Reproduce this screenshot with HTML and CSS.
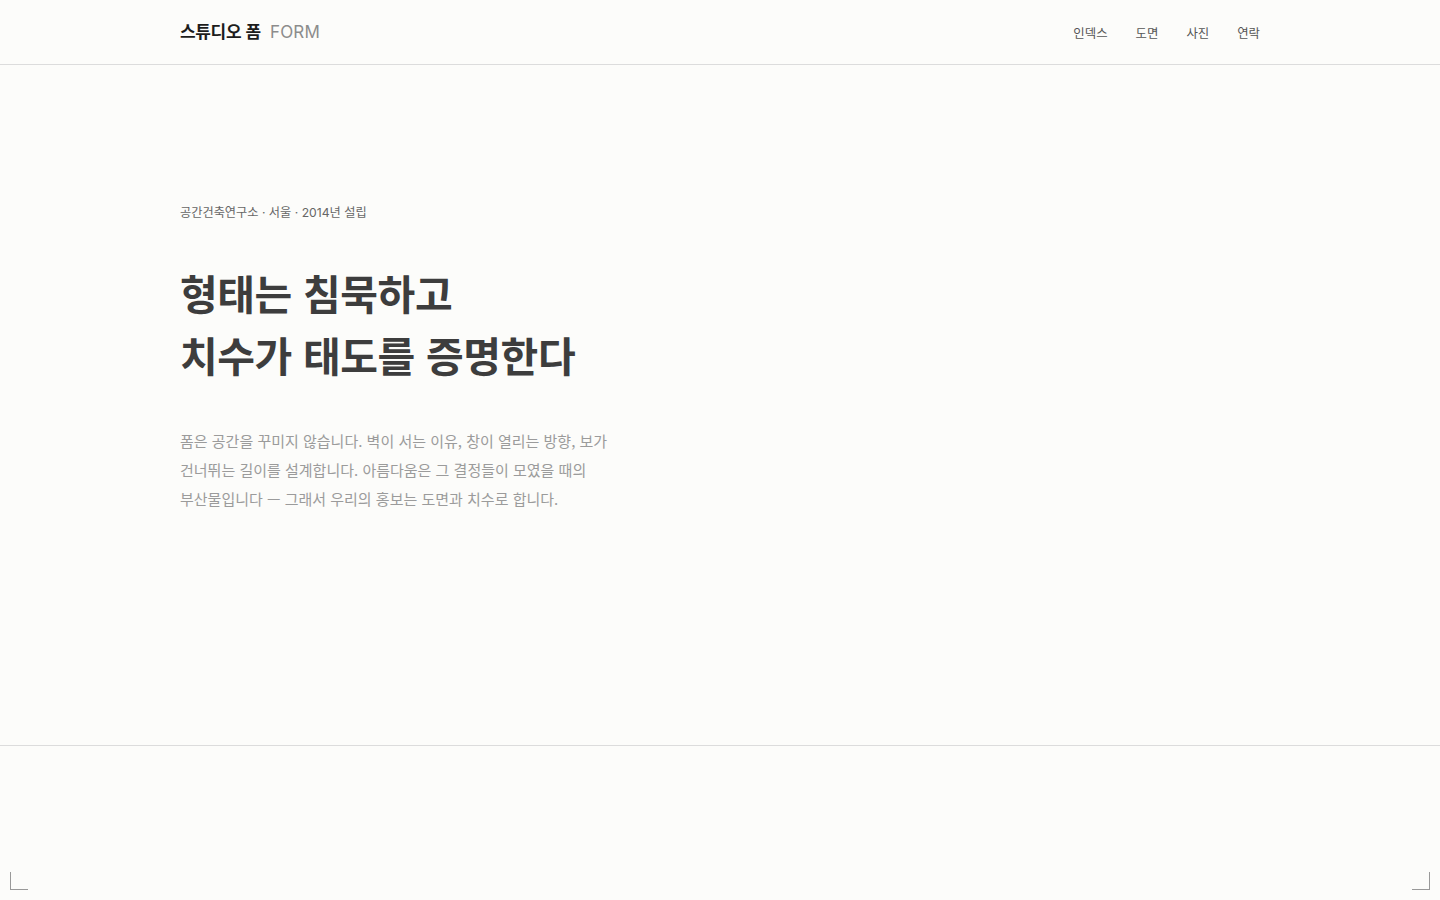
FILE: index.html
```html
<!DOCTYPE html>
<html lang="ko">
<head>
<meta charset="utf-8">
<title>스튜디오 폼 FORM</title>
<link rel="stylesheet" href="styles.css">
</head>
<body>
<header class="site-header">
  <div class="container header-inner">
    <a class="logo" href="#"><span class="logo-ko">스튜디오 폼</span><span class="logo-en">FORM</span></a>
    <nav class="nav">
      <a href="#">인덱스</a>
      <a href="#">도면</a>
      <a href="#">사진</a>
      <a href="#">연락</a>
    </nav>
  </div>
</header>
<main>
  <section class="hero">
    <div class="container">
      <p class="eyebrow">공간건축연구소 · 서울 · 2014년 설립</p>
      <h1 class="title">형태는 침묵하고<br>치수가 태도를 증명한다</h1>
      <p class="lead">폼은 공간을 꾸미지 않습니다. 벽이 서는 이유, 창이 열리는 방향, 보가 건너뛰는 길이를 설계합니다. 아름다움은 그 결정들이 모였을 때의 부산물입니다 — 그래서 우리의 홍보는 도면과 치수로 합니다.</p>
    </div>
  </section>
  <section class="next"></section>
</main>
<span class="corner corner-left"></span>
<span class="corner corner-right"></span>
</body>
</html>
```

FILE: styles.css
```css
* { box-sizing: border-box; }
html, body { margin: 0; padding: 0; }
body {
  background: #fcfcfa;
  font-family: "Inter", "Noto Sans CJK KR", sans-serif;
  color: #333;
  -webkit-font-smoothing: antialiased;
}
a { text-decoration: none; color: inherit; }

.container {
  width: 1080px;
  margin: 0 auto;
}

.site-header {
  height: 65px;
  border-bottom: 1px solid #dcdcdc;
}
.header-inner {
  height: 64px;
  display: flex;
  align-items: center;
  justify-content: space-between;
}
.logo {
  display: flex;
  align-items: baseline;
  gap: 9px;
  font-size: 17px;
  line-height: 1;
  margin-top: -2px;
}
.logo-ko {
  font-family: "Noto Sans CJK KR", sans-serif;
  font-weight: 700;
  color: #1c1c1c;
  letter-spacing: -0.02em;
}
.logo-en {
  font-family: "Inter", sans-serif;
  font-weight: 400;
  color: #8c8c8c;
  font-size: 17px;
  letter-spacing: 0.01em;
}
.nav {
  display: flex;
  gap: 28px;
  padding-top: 2px;
}
.nav a {
  font-family: "Noto Sans CJK KR", sans-serif;
  font-size: 12.4px;
  color: #555;
}

.hero {
  height: 681px;
  border-bottom: 1px solid #dcdcdc;
  padding-top: 139px;
}
.eyebrow {
  margin: 0 0 39px;
  font-size: 12.2px;
  line-height: 18px;
  color: #666;
  font-family: "Inter", "Noto Sans CJK KR", sans-serif;
}
.title {
  margin: 0 0 41px;
  font-family: "Noto Sans CJK KR", sans-serif;
  font-size: 41px;
  line-height: 62px;
  font-weight: 700;
  color: #3d3d3d;
  letter-spacing: -0.01em;
}
.lead {
  margin: 0;
  width: 432px;
  font-family: "Noto Sans CJK KR", sans-serif;
  font-size: 15px;
  line-height: 29px;
  color: #9b9b9b;
  word-break: keep-all;
}

.next {
  height: 154px;
}

.corner {
  position: fixed;
  bottom: 10px;
  width: 18px;
  height: 18px;
  border-bottom: 1px solid #999;
}
.corner-left {
  left: 10px;
  border-left: 1px solid #999;
}
.corner-right {
  right: 10px;
  border-right: 1px solid #999;
}
```
